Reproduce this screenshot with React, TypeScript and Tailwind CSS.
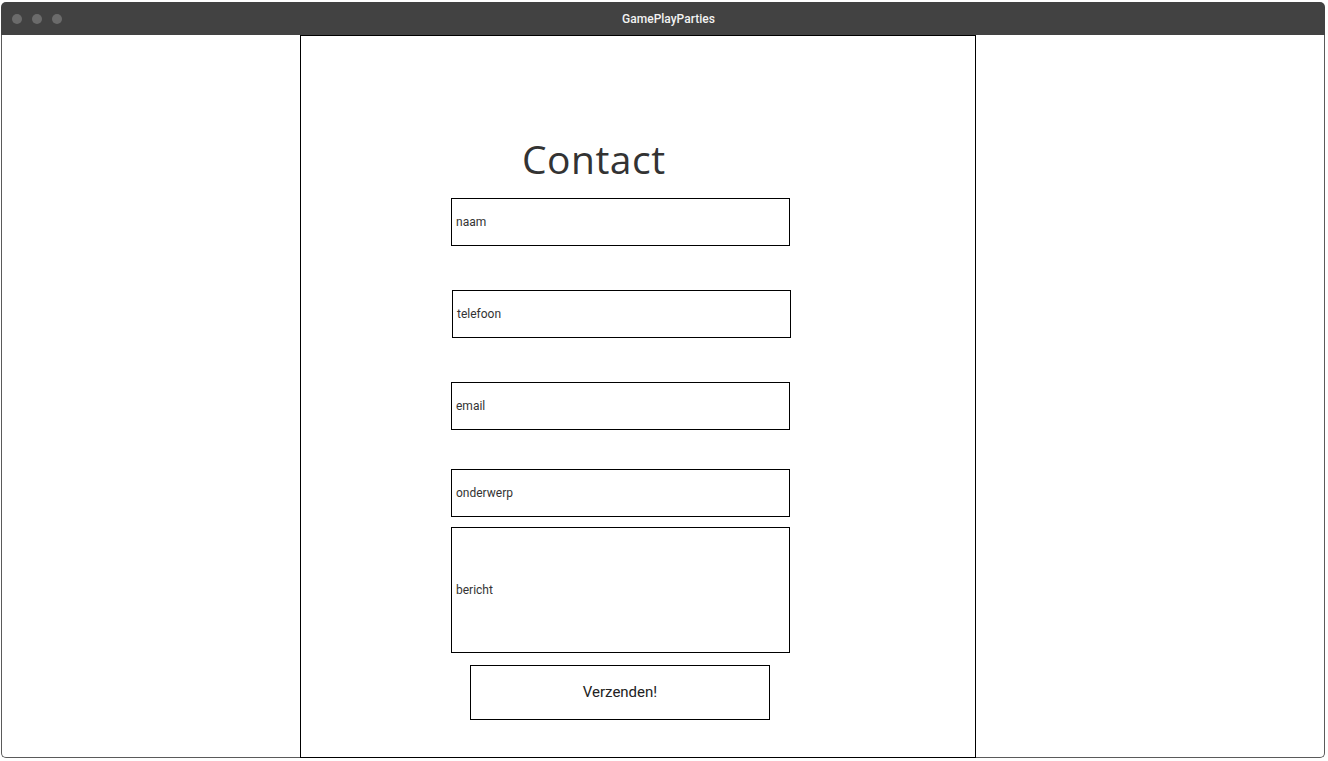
import React from "react";

const fields = [
  { label: "naam", box: "mt-[20px] h-[48px]" },
  { label: "telefoon", box: "mt-[44px] h-[48px] ml-px" },
  { label: "email", box: "mt-[44px] h-[48px]" },
  { label: "onderwerp", box: "mt-[39px] h-[48px]" },
  { label: "bericht", box: "mt-[10px] h-[126px]" },
];

const App: React.FC = () => {
  return (
    <div className="w-[1328px] h-[761px] bg-white pt-[2px] pl-px pr-[3px] pb-[3px] font-['Roboto',sans-serif]">
      <div className="flex flex-col h-full">
        {/* Title bar */}
        <div className="h-[33px] bg-[#424242] rounded-t-[5px] flex items-center shrink-0">
          <div className="flex gap-[10px] pl-[11px]">
            <span className="w-[10px] h-[10px] rounded-full bg-[#6b6b6b]" />
            <span className="w-[10px] h-[10px] rounded-full bg-[#6b6b6b]" />
            <span className="w-[10px] h-[10px] rounded-full bg-[#6b6b6b]" />
          </div>
          <div className="flex-1 text-center pr-[50px] text-[12px] font-medium text-[#f2f2f2]">
            GamePlayParties
          </div>
        </div>

        {/* Window body */}
        <div className="flex flex-1">
          <div className="w-[299px] border-l border-b border-[#5a5a5a] rounded-bl-[5px]" />
          <div className="w-[676px] h-full border border-black">
            <h1 className="mt-[103px] ml-[221px] text-[39px] leading-none tracking-[0.5px] text-[#333] font-['Open_Sans',sans-serif]">
              Contact
            </h1>
            <form className="ml-[150px] flex flex-col items-start">
              {fields.map((f) => (
                <div
                  key={f.label}
                  className={`${f.box} w-[339px] border border-black flex items-center pl-[4px] text-[12px] text-[#333]`}
                >
                  {f.label}
                </div>
              ))}
              <button
                type="button"
                className="mt-[12px] ml-[19px] w-[300px] h-[55px] border border-black text-[15px] text-[#222]"
              >
                Verzenden!
              </button>
            </form>
          </div>
          <div className="flex-1 border-r border-b border-[#5a5a5a] rounded-br-[5px]" />
        </div>
      </div>
    </div>
  );
};

export default App;
